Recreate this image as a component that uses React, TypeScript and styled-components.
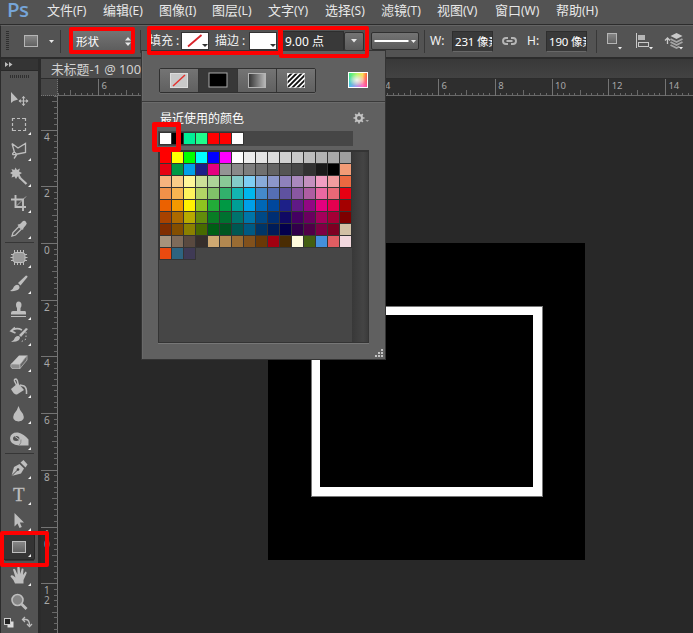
import React from 'react';
import styled, { createGlobalStyle, css } from 'styled-components';

const GlobalStyle = createGlobalStyle`
  *, *::before, *::after { box-sizing: border-box; }
  html, body { margin: 0; padding: 0; overflow: hidden; background: #282828; }
  body { font-family: "Noto Sans", "Noto Sans CJK SC", sans-serif; font-size: 12px; color: #e6e6e6; }
  svg { display: block; }
`;

const AppWindow = styled.div`
  position: relative;
  display: flex;
  flex-direction: column;
  width: 693px;
  height: 633px;
  overflow: hidden;
  background: #282828;
`;

/* ---------- menu bar ---------- */

const MenuBar = styled.nav`
  display: flex;
  flex: none;
  height: 25px;
  padding-left: 7px;
  background: #535353;
  border-bottom: 1px solid #2c2c2c;
`;

const Logo = styled.div`
  width: 40px;
  font: 600 20.5px/18px "Open Sans", sans-serif;
  letter-spacing: -0.5px;
  color: #76a5d8;
  height: 24px;
`;

const MenuItem = styled.span<{ $w: number }>`
  width: ${p => p.$w}px;
  flex: none;
  font-size: 12px;
  line-height: 19px;
  white-space: nowrap;
  color: #e8e8e8;
`;

const Cjk = styled.span`
  font-family: "Noto Sans CJK SC", sans-serif;
  font-size: 13px;
`;

/* ---------- options bar ---------- */

const OptionsBar = styled.div`
  display: flex;
  align-items: center;
  flex: none;
  height: 34px;
  padding: 0 0 1px 5px;
  background: #535353;
  border-top: 1px solid #646464;
  border-left: 1px solid #2c2c2c;
  border-bottom: 2px solid #2c2c2c;
`;

const Slot = styled.div<{ $w: number; $gap?: number }>`
  display: flex;
  align-items: center;
  flex: none;
  width: ${p => p.$w}px;
  margin-left: ${p => p.$gap ?? 0}px;
  white-space: nowrap;
`;

const Label = styled(Slot)`
  font: 12px/18px "Noto Sans", "Noto Sans CJK SC", sans-serif;
  color: #f2f2f2;
`;

const Divider = styled.div<{ $gap: number }>`
  flex: none;
  width: 1px;
  height: 23px;
  margin-left: ${p => p.$gap}px;
  background: #383838;
`;

const raised = css`
  background: linear-gradient(#747474, #5b5b5b);
  border: 1px solid #303030;
  border-radius: 2px;
`;

const ModeSelect = styled(Slot)`
  ${raised};
  height: 23px;
  padding-left: 6px;
  justify-content: space-between;
  padding-right: 3px;
  color: #fff;
  font-size: 11.5px;
`;

const PaintSwatch = styled(Slot)`
  height: 18px;
  background: #fff;
  border: 1px solid #333;
`;

const Field = styled(Slot)`
  height: 21px;
  padding-left: 2px;
  background: #393939;
  border: 1px solid #2e2e2e;
  border-bottom-color: #686868;
  color: #fff;
  overflow: hidden;
`;

const SizeField = styled(Field)`
  font-size: 11.5px;
  letter-spacing: -0.2px;
`;

const DropButton = styled(Slot)`
  ${raised};
  height: 19px;
  justify-content: center;
`;

const LineSelect = styled(Slot)`
  ${raised};
  height: 18px;
`;

/* ---------- workspace ---------- */

const Workspace = styled.div`
  display: flex;
  flex: 1;
  min-height: 0;
`;

const ToolPalette = styled.aside`
  display: flex;
  flex-direction: column;
  flex: none;
  width: 41px;
  background: #535353;
  border-left: 1px solid #2c2c2c;
  border-right: 3px solid #2b2b2b;
`;

const PaletteHeader = styled.div`
  flex: none;
  height: 12px;
  padding: 3px 0 0 4px;
  background: #343434;
  border-bottom: 1px solid #292929;
`;

const PaletteGrip = styled.div`
  flex: none;
  height: 15px;
  padding: 4px 0 0 9px;
`;

const Tool = styled.div<{ $active?: boolean }>`
  position: relative;
  flex: none;
  width: 32px;
  height: 26px;
  margin-left: 2px;
  padding-left: 3px;
  border-radius: 2px;
  background: ${p => (p.$active ? '#343434' : 'transparent')};
  box-shadow: ${p => (p.$active ? 'inset 0 0 0 1px #272727' : 'none')};
`;

const ToolDivider = styled.div`
  flex: none;
  height: 3px;
  margin: 0 4px;
  border-top: 1px solid #363636;
`;

const Document = styled.main`
  display: flex;
  flex-direction: column;
  flex: 1;
  min-width: 0;
`;

const TabStrip = styled.div`
  display: flex;
  flex: none;
  height: 20px;
  background: linear-gradient(#393939, #424242);
  border-bottom: 1px solid #2c2c2c;
`;

const Tab = styled.div`
  width: 160px;
  padding-left: 10px;
  background: #4c4c4c;
  font: 12.8px/21px "Noto Sans", "Noto Sans CJK SC", sans-serif;
  color: #d2d2d2;
  white-space: nowrap;
`;

const CanvasGrid = styled.div`
  display: grid;
  grid-template: 17px 1fr / 17px 1fr;
  flex: 1;
`;

const RulerCorner = styled.div`
  background: #464646;
  border-right: 1px dotted #777;
  border-bottom: 1px dotted #777;
`;

const RulerBox = styled.div`
  background: #2e2e2e;
  overflow: hidden;
`;

const Pasteboard = styled.div`
  position: relative;
  background: #282828;
`;

const Artboard = styled.div`
  position: absolute;
  left: 210px;
  top: 147px;
  width: 317px;
  height: 317px;
  background: #000;
`;

const DrawnRectangle = styled.div`
  position: absolute;
  left: 43px;
  top: 63px;
  width: 232px;
  height: 191px;
  border: 1px solid #777;

  &::after {
    content: "";
    display: block;
    height: 100%;
    border: solid #fff;
    border-width: 8px 9px 9px 8px;
  }
`;

/* ---------- fill popup ---------- */

const FillPopup = styled.section`
  position: absolute;
  left: 141px;
  top: 50px;
  width: 245px;
  height: 310px;
  background: #606060;
  border: 1px solid #343434;
  display: flex;
  flex-direction: column;
  box-shadow: inset 1px 0 #696969;
`;

const FillTypes = styled.div`
  display: flex;
  align-items: center;
  height: 50px;
  padding: 8px 0 0 17px;
  flex: none;
`;

const Segments = styled.div`
  display: flex;
  width: 157px;
  height: 25px;
  border: 1px solid #303030;
  border-radius: 2px;
  box-shadow: 0 1px #6d6d6d;
`;

const Segment = styled.div<{ $active?: boolean }>`
  display: flex;
  align-items: center;
  justify-content: center;
  flex: 1;
  background: ${p => (p.$active ? '#383838' : 'linear-gradient(#747474, #606060)')};

  & + & { border-left: 1px solid #353535; }
`;

const SpectrumButton = styled.div`
  margin-left: 32px;
`;

const RecentHeader = styled.div`
  display: flex;
  align-items: center;
  justify-content: space-between;
  flex: none;
  height: 30px;
  padding: 3px 16px 0 18px;
  border-top: 1px solid #3a3a3a;
  box-shadow: inset 0 1px #6b6b6b;
  font: 12px/18px "Noto Sans CJK SC", sans-serif;
  color: #fff;
`;

const RecentStrip = styled.div`
  display: flex;
  gap: 1px;
  flex: none;
  width: 195px;
  height: 15px;
  margin-left: 16px;
  padding: 2px;
  background: #464646;
`;

const Swatch = styled.i<{ $color: string }>`
  display: block;
  width: 11px;
  height: 11px;
  background: ${p => p.$color};
  box-shadow: 0 0 0 1px #343434;
`;

const SwatchArea = styled.div`
  display: flex;
  justify-content: space-between;
  flex: none;
  width: 211px;
  height: 193px;
  margin: 4px 0 0 16px;
  background: #464646;
  border: 1px solid #343434;
  border-top-width: 2px;
  box-shadow: 0 1px #777;
`;

const SwatchGrid = styled.div`
  display: grid;
  grid-template-columns: repeat(16, 11px);
  grid-auto-rows: 11px;
  gap: 1px;
  padding-left: 1px;
  align-content: start;
`;

const ScrollTrack = styled.div`
  width: 16px;
  background: linear-gradient(90deg, #383838, #444 70%, #3b3b3b);
`;

const ResizeCorner = styled.div`
  display: flex;
  justify-content: flex-end;
  padding: 6px 2px 0 0;
`;

/* ---------- highlight frames laid over the window ---------- */

const Highlight = styled.div<{ $x: number; $y: number; $w: number; $h: number; $b?: number }>`
  position: absolute;
  left: ${p => p.$x}px;
  top: ${p => p.$y}px;
  width: ${p => p.$w}px;
  height: ${p => p.$h}px;
  border: ${p => p.$b ?? 4}px solid #fe0000;
  border-radius: 2px;
  pointer-events: none;
`;

const menus: [string, string, number][] = [
  ['文件', '(F)', 56], ['编辑', '(E)', 56], ['图像', '(I)', 53], ['图层', '(L)', 56],
  ['文字', '(Y)', 57], ['选择', '(S)', 56], ['滤镜', '(T)', 56], ['视图', '(V)', 58],
  ['窗口', '(W)', 61], ['帮助', '(H)', 50],
];

const recent = ['#fff', '#000', '#00ef96', '#20fc8b', '#f00', '#f00', '#fff'];

const swatches = `
ff0000 ffff00 00ff00 00ffff 0000ff ff00ff ffffff ededed e4e4e4 dbdbdb d1d1d1 c8c8c8 bdbdbd b3b3b3 a9a9a9 9e9e9e
e60012 009944 00a0e9 1d2088 e4007f 949494 898989 7d7d7d 707070 636363 555555 464646 323232 1a1a1a 000000 f29b76
f6b37f facd89 fff799 cce198 acd598 89c997 84ccc9 7ecef4 88abda 8c97cb 8f82bc aa89bd c490bf f19ec2 f29c9f ec6941
f19149 f8b551 fff45c b3d465 80c269 32b16c 13b5b1 00b7ee 448aca 556fb5 5f52a0 8957a1 ae5da1 ea68a2 eb6877 e60012
eb6100 f39800 fff100 8fc31f 22ac38 009944 009e96 00a0e9 0068b7 00479d 1d2088 601986 920783 e4007f e5004f a40000
a84200 ac6a00 b7aa00 638c0b 097c25 007130 00736d 0075a9 004986 002e73 100964 440062 6a005f a4005b a40035 7d0000
7f2d00 834e00 8a8000 486a00 005e15 005520 005752 005982 003567 001c58 03004c 31004a 500047 7e0043 7d0022 d1c0a5
a6937c 7e6b5a 59493f 362e2b cfa972 b28850 996c33 81511c 6a3906 a20010 4a2c03 fffbdc 445f11 448fdb e05d62 f2d8de
e94a10 2e6480 3f3a55`.trim().split(/\s+/);

const CM = 56.7;

function HorizontalRuler() {
  const origin = 210;
  const ticks = [];
  for (let i = -38; i <= 80; i++) {
    const x = Math.round(origin + (i * CM) / 10);
    const h = i % 10 === 0 ? 17 : i % 5 === 0 ? 6 : 3;
    ticks.push(<rect key={i} x={x} y={17 - h} width="1" height={h} fill={i % 10 === 0 ? '#747474' : '#696969'} />);
  }
  return (
    <svg width="635" height="17">
      <rect y="16" width="635" height="1" fill="#696969" />
      {ticks}
      {[-3, -2, -1, 0, 1, 2, 3, 4, 5, 6, 7].map(n => (
        <text key={n} x={origin + n * CM + 3.5} y="10" fontFamily="Noto Sans" fontSize="9.5" fill="#a8a8a8">{Math.abs(n * 2)}</text>
      ))}
    </svg>
  );
}

function VerticalRuler() {
  const origin = 147;
  const ticks = [];
  for (let i = -26; i <= 68; i++) {
    const y = Math.round(origin + (i * CM) / 10);
    const w = i % 10 === 0 ? 17 : i % 5 === 0 ? 6 : 4;
    ticks.push(<rect key={i} x={17 - w} y={y} width={w} height="1" fill={i % 10 === 0 ? '#747474' : '#696969'} />);
  }
  return (
    <svg width="17" height="537">
      <rect x="16" width="1" height="537" fill="#747474" />
      {ticks}
      {[-2, -1, 0, 1, 2, 3, 4, 5, 6].map(n =>
        String(Math.abs(n * 2)).split('').map((d, k) => (
          <text key={`${n}-${k}`} x="3" y={origin + n * CM + 11 + k * 10} fontFamily="Noto Sans" fontSize="10" fill="#a8a8a8">{d}</text>
        )),
      )}
    </svg>
  );
}

const Caret = ({ color = '#e8e8e8', w = 6 }: { color?: string; w?: number }) => (
  <svg width={w} height={w / 2 + 0.5}><path d={`M0 0H${w}L${w / 2} ${w / 2 + 0.5}Z`} fill={color} /></svg>
);

const L = '#bebebe';

const icons: Record<string, React.ReactNode> = {
  move: (
    <>
      <path d="M5 6V17L7.500 15L12 13.500Z" fill={L} />
      <path d="M17.500 10.500V19.500M13 15H22" stroke={L} strokeWidth="1.100" />
      <path d="M17.500 10L19.500 12.300H15.500ZM17.500 20L19.500 17.700H15.500ZM12.500 15L14.800 13V17ZM22.500 15L20.200 13V17Z" fill={L} />
    </>
  ),
  marquee: <path d="M6.500 9V6.500H9M11 6.500H14M16 6.500H19.500V9M19.500 11V14M19.500 16V18.500H17M15 18.500H12M10 18.500H6.500V16M6.500 14V11" stroke={L} strokeWidth="1.200" fill="none" />,
  lasso: <path d="M6 5.500L12 10L19.500 5.500V14.500L9 16.500Q5 17 7.500 14.500Q10 14 10.500 17L8 20.500M8.500 14.500L6 5.500" stroke={L} strokeWidth="1.300" fill="none" />,
  wand: (
    <>
      <path d="M9.500 3.500L11 6L14 4.500L13 7.500L16 9L13.500 10.500L15 13.500L11.500 12.500L10 15L8.500 12.500L5.500 13.500L6.500 10.500L4 9L6.500 7.500L5.500 5L8.500 6Z" fill={L} />
      <path d="M13 13L20.500 20" stroke={L} strokeWidth="2.200" />
    </>
  ),
  crop: (
    <>
      <path d="M9.500 5V17H20M5 9.500H17V21" stroke={L} strokeWidth="1.900" fill="none" />
      <path d="M10.500 16L20 6.500" stroke={L} strokeWidth=".8" />
    </>
  ),
  eyedropper: (
    <>
      <path d="M6 20L7 16.500L13 10.500L15.500 13L9.500 19Z" stroke={L} strokeWidth="1.300" fill="#555" />
      <path d="M12 8.500L14 8L17 5Q19 4 20 6Q21.500 7.500 20 9L17.500 12L17 14L11.500 9Z" fill={L} />
    </>
  ),
  patch: (
    <>
      <path d="M8.500 5V20M11.500 5V20M14.500 5V20M17.500 5V20M5 9.500H21M4.500 12.500H21.500M5 15.500H21" stroke={L} />
      <rect x="7" y="7.500" width="12" height="10" rx="3" fill="#9a9a9a" stroke={L} />
    </>
  ),
  brush: (
    <>
      <path d="M12 12L20 4.500Q22 4.500 21.500 6L14.500 14.500Z" fill={L} />
      <path d="M4 20Q7 19 8 15.500Q10.500 12.500 13 14.500Q15 18 10 19.500Q7 20.500 4 20Z" fill={L} />
    </>
  ),
  stamp: (
    <>
      <path d="M10 8Q10 4.500 12.500 4.500Q15.500 4.500 15.500 8Q15.500 10 14.500 11V14H19Q20 14 20 16V17.500H5V16Q5 14 7 14H11V11Q10 10 10 8Z" fill={L} />
      <path d="M5 19.500H20" stroke={L} />
    </>
  ),
  history: (
    <>
      <path d="M5 8Q10 4 16 7M9 4.500L5 8L9.500 10" stroke={L} strokeWidth="1.700" fill="none" />
      <path d="M13 12L20 5L22 6L15 14ZM5 19Q8 18 9 14.500Q12 12 14 14Q14 17.500 10 18.500Z" fill={L} />
      <path d="M20 9V16L14 19.500" stroke={L} strokeDasharray="1.500 2" fill="none" />
    </>
  ),
  eraser: (
    <>
      <path d="M5 15L13 6.500H21L14 15.500Z" fill="#c9c9c9" />
      <path d="M5 15L14 15.500V19.500H6Q4 18 5 15Z" fill="#8e8e8e" stroke={L} strokeWidth=".7" />
      <path d="M14 15.500L21 6.500V11L14 19.500Z" fill="#666" stroke={L} strokeWidth=".7" />
    </>
  ),
  bucket: (
    <>
      <path d="M5 14L12 8L18 15L11 19.500Q8 20 5 14Z" fill={L} />
      <path d="M12 13L8.500 6Q8 4 10 4Q12 5 12 11M14 10L18 11Q21 12.500 20.500 19" stroke={L} strokeWidth="1.500" fill="none" />
    </>
  ),
  drop: <path d="M12.500 5Q13.500 9 17 13Q20 20 12.500 20.500Q5 20 8 13Q11.500 9 12.500 5Z" fill={L} />,
  sponge: (
    <>
      <path fillRule="evenodd" d="M4 11Q5 5 12 5.500Q18 7 22.500 12.500V18.500H13Q4 18 4 11ZM7 11.500A3.200 2.500 0 1 0 13.400 11.500A3.200 2.500 0 1 0 7 11.500Z" fill={L} />
      <path d="M9 9.500L13 12.500" stroke={L} />
      <path d="M13 18.500Q15.500 16 15 12.500" stroke="#888" fill="none" />
    </>
  ),
  pen: (
    <>
      <path d="M5.500 20L8 11L13.500 8L18 12.500L15 17.500Z" fill={L} />
      <path d="M5.500 20L11.500 14" stroke="#444" />
      <circle cx="12" cy="13.500" r="1.300" fill="#444" />
      <path d="M14.500 6.500L17.500 4L21.500 8.500L19.500 11.500Z" fill={L} />
    </>
  ),
  type: <text x="7" y="19" fontFamily="Liberation Serif" fontSize="19" fill={L} stroke={L} strokeWidth=".3">T</text>,
  select: <path d="M8.500 5V18.500L11.500 15.500L13.500 20L15.800 19L13.800 14.500H18Z" fill={L} />,
  rect: <rect x="6.500" y="7.500" width="13" height="11" fill="url(#metal)" stroke={L} />,
  hand: <path d="M9 20.500Q8 17 4.500 13.500Q5 11.500 7 12.500L9.500 14.500L7 6.500Q8 5 9.200 6.500L11.500 11.500L11.300 4.500Q12.500 3.200 13.700 4.500L14.200 11L15.800 5.500Q17.500 5 17.500 6.500L17 12L19.500 8.500Q21 8.500 20.500 10.500L17.500 17V20.500Z" fill={L} />,
  zoom: (
    <>
      <circle cx="11.500" cy="11" r="5.500" fill="#858585" stroke={L} strokeWidth="1.600" />
      <path d="M15.500 15L20.500 20" stroke={L} strokeWidth="2.800" />
    </>
  ),
};

const groups = [
  ['move', 'marquee', 'lasso', 'wand', 'crop', 'eyedropper'],
  ['patch', 'brush', 'stamp', 'history', 'eraser', 'bucket', 'drop', 'sponge'],
  ['pen', 'type', 'select', 'rect'],
  ['hand', 'zoom'],
];

function ToolButton({ name }: { name: string }) {
  const hasMore = name !== 'move' && name !== 'zoom';
  return (
    <Tool $active={name === 'rect'}>
      <svg width="28" height="26">
        <g>{icons[name]}</g>
        {hasMore && <path d="M25 20V23H22Z" fill="#f2f2f2" />}
      </svg>
    </Tool>
  );
}

const SharedGradients = styled.svg`
  position: absolute;
  width: 0;
  height: 0;
`;

export default function App() {
  return (
    <AppWindow>
      <GlobalStyle />
      <SharedGradients>
        <defs>
          <linearGradient id="metal" x1="0" y1="0" x2="0" y2="1">
            <stop offset="0" stopColor="#888" /><stop offset="1" stopColor="#606060" />
          </linearGradient>
        </defs>
      </SharedGradients>

      <MenuBar>
        <Logo>Ps</Logo>
        {menus.map(([name, key, w]) => (
          <MenuItem key={name} $w={w}><Cjk>{name}</Cjk>{key}</MenuItem>
        ))}
      </MenuBar>

      <OptionsBar>
        <Slot $w={18}>
          <svg width="3" height="20">
            {Array.from({ length: 10 }, (_, i) => <rect key={i} y={i * 2} width="3" height="1" fill="#2f2f2f" />)}
          </svg>
        </Slot>
        <Slot $w={25}>
          <svg width="14" height="12"><rect x=".5" y=".5" width="13" height="11" fill="url(#metal)" stroke="#b5b5b5" /></svg>
        </Slot>
        <Slot $w={6}><Caret w={5} /></Slot>
        <Divider $gap={5} />
        <ModeSelect $w={66} $gap={8}>
          形状
          <svg width="6" height="9"><path d="M3 0L6 3.500H0ZM3 9L0 5.500H6Z" fill="#e8e8e8" /></svg>
        </ModeSelect>
        <Divider $gap={5} />
        <Label $w={32} $gap={8}>填充 :</Label>
        <PaintSwatch $w={28}>
          <svg width="26" height="16">
            <path d="M6 13.500L19.500 2" stroke="#d9222a" strokeWidth="1.800" />
            <path d="M20 11H26L23 14Z" fill="#333" />
          </svg>
        </PaintSwatch>
        <Label $w={34} $gap={6}>描边 :</Label>
        <PaintSwatch $w={28}>
          <svg width="26" height="16"><path d="M20 11H26L23 14Z" fill="#333" /></svg>
        </PaintSwatch>
        <Field $w={62} $gap={5}>9.00 点</Field>
        <DropButton $w={20}><Caret /></DropButton>
        <LineSelect $w={48} $gap={7}>
          <svg width="46" height="16">
            <path d="M2.500 8H36.500" stroke="#fff" strokeWidth="2" />
            <path d="M39 7H44L41.500 10Z" fill="#eee" />
          </svg>
        </LineSelect>
        <Divider $gap={5} />
        <Label $w={22} $gap={5}>W:</Label>
        <SizeField $w={41}>231 像素</SizeField>
        <Slot $w={25} $gap={9}>
          <svg width="15" height="10" fill="none" stroke="#b5b5b5" strokeWidth="1.900">
            <path d="M6 8H4Q1 8 1 5Q1 2 4 2H6M9 2H11Q14 2 14 5Q14 8 11 8H9M4.500 5H10.500" />
          </svg>
        </Slot>
        <Label $w={19}>H:</Label>
        <SizeField $w={41}>190 像素</SizeField>
        <Divider $gap={9} />
        <Slot $w={29} $gap={9}>
          <svg width="18" height="18">
            <rect x="1.500" y="1.500" width="9" height="10" fill="url(#metal)" stroke="#b5b5b5" />
            <path d="M12 15H16L14 17.500Z" fill="#eee" />
          </svg>
        </Slot>
        <Slot $w={29}>
          <svg width="18" height="18">
            <path d="M1.500 1V16" stroke="#c9c9c9" />
            <rect x="3" y="3" width="7" height="5" fill="#b5b5b5" />
            <rect x="3.500" y="10.500" width="10" height="4" fill="#555" stroke="#c9c9c9" />
            <path d="M14 15H18L16 17.500Z" fill="#eee" />
          </svg>
        </Slot>
        <Slot $w={22}>
          <svg width="21" height="20">
            <path d="M3.500 13V8M1 9.500L3.500 7L6 9.500" stroke="#c9c9c9" strokeWidth="1.300" fill="none" />
            <path d="M12.500 2L18.500 5L12.500 8L6.500 5Z" fill="#c9c9c9" />
            <path d="M6.500 8L12.500 11L18.500 8M6.500 11L12.500 14L18.500 11M6.500 14L12.500 17L15.500 15.500" stroke="#a5a5a5" strokeWidth="1.900" fill="none" />
            <path d="M15 16H19L17 18.500Z" fill="#eee" />
          </svg>
        </Slot>
      </OptionsBar>

      <Workspace>
        <ToolPalette>
          <PaletteHeader>
            <svg width="8" height="5"><path d="M0 0L3.500 2.500L0 5ZM4 0L7.500 2.500L4 5Z" fill="#bdbdbd" /></svg>
          </PaletteHeader>
          <PaletteGrip>
            <svg width="20" height="3">
              {Array.from({ length: 10 }, (_, i) => <rect key={i} x={i * 2} width="1" height="3" fill="#2f2f2f" />)}
            </svg>
          </PaletteGrip>
          {groups.map((g, i) => (
            <React.Fragment key={i}>
              {i > 0 && <ToolDivider />}
              {g.map(name => <ToolButton key={name} name={name} />)}
            </React.Fragment>
          ))}
          <svg width="34" height="18">
            <rect x="6.500" y="6.500" width="6" height="6" fill="#ddd" />
            <rect x="3.500" y="3.500" width="6" height="6" fill="#222" stroke="#ccc" />
            <path d="M22 4.500H25Q28.500 5 28.500 10M24 2L21.500 4.500L24 7M26 9L28.500 11.500L31 9" stroke={L} strokeWidth="1.300" fill="none" />
          </svg>
        </ToolPalette>

        <Document>
          <TabStrip><Tab>未标题-1 @ 100%</Tab></TabStrip>
          <CanvasGrid>
            <RulerCorner />
            <RulerBox><HorizontalRuler /></RulerBox>
            <RulerBox><VerticalRuler /></RulerBox>
            <Pasteboard>
              <Artboard><DrawnRectangle /></Artboard>
            </Pasteboard>
          </CanvasGrid>
        </Document>
      </Workspace>

      <FillPopup>
        <FillTypes>
          <Segments>
            <Segment>
              <svg width="18" height="15">
                <rect x=".5" y=".5" width="17" height="14" fill="#c9c9c9" stroke="#ddd" />
                <path d="M3 13L15 2" stroke="#e2322f" strokeWidth="1.500" />
              </svg>
            </Segment>
            <Segment $active>
              <svg width="20" height="16"><rect x="1" y="1" width="18" height="14" fill="#000" stroke="#aaa" /></svg>
            </Segment>
            <Segment>
              <svg width="18" height="15">
                <defs><linearGradient id="fade"><stop stopColor="#333" /><stop offset="1" stopColor="#bbb" /></linearGradient></defs>
                <rect x=".5" y=".5" width="17" height="14" fill="url(#fade)" stroke="#b5b5b5" />
              </svg>
            </Segment>
            <Segment>
              <svg width="18" height="15">
                <rect width="18" height="15" fill="#fff" />
                <path d="M-1 6L6 -1M-1 11L11 -1M-1 16L16 -1M4 16L19 1M9 16L19 6M14 16L19 11" stroke="#111" strokeWidth="1.900" />
                <rect x=".5" y=".5" width="17" height="14" fill="none" stroke="#ddd" strokeOpacity=".6" />
              </svg>
            </Segment>
          </Segments>
          <SpectrumButton>
            <svg width="20" height="16">
              <defs>
                <linearGradient id="top-hues">
                  <stop stopColor="#39e24f" /><stop offset=".3" stopColor="#2fd5ea" />
                  <stop offset=".65" stopColor="#a46cff" /><stop offset="1" stopColor="#ff3f9b" />
                </linearGradient>
                <linearGradient id="bottom-hues">
                  <stop stopColor="#48b8ff" /><stop offset=".4" stopColor="#a98aff" />
                  <stop offset=".75" stopColor="#ff58dc" /><stop offset="1" stopColor="#ff4a9c" />
                </linearGradient>
                <linearGradient id="warm">
                  <stop stopColor="#3fe88a" /><stop offset=".45" stopColor="#b8f56a" />
                  <stop offset=".75" stopColor="#ffdf5a" /><stop offset="1" stopColor="#ff5a3c" />
                </linearGradient>
                <linearGradient id="down" x1="0" y1="0" x2="0" y2="1">
                  <stop offset=".2" stopColor="#fff" stopOpacity="0" /><stop offset="1" stopColor="#fff" />
                </linearGradient>
                <mask id="lower"><rect width="20" height="16" fill="url(#down)" /></mask>
                <radialGradient id="glow"><stop stopColor="#fff" /><stop offset="1" stopColor="#fff" stopOpacity="0" /></radialGradient>
              </defs>
              <rect width="20" height="16" fill="#fff" />
              <rect x="1" y="1" width="18" height="14" fill="url(#warm)" />
              <rect x="1" y="1" width="18" height="14" fill="url(#bottom-hues)" mask="url(#lower)" />
              <ellipse cx="9" cy="8" rx="8" ry="6" fill="url(#glow)" opacity=".8" />
            </svg>
          </SpectrumButton>
        </FillTypes>

        <RecentHeader>
          最近使用的颜色
          <svg width="16" height="12">
            <circle cx="6" cy="6" r="3" fill="none" stroke="#c4c4c4" strokeWidth="2" />
            <path d="M6 0.500V3M6 9V11.500M0.500 6H3M9 6H11.500M2.200 2.200L4 4M8 8L9.800 9.800M9.800 2.200L8 4M4 8L2.200 9.800" stroke="#c4c4c4" strokeWidth="1.700" />
            <path d="M12.500 8H16L14.200 10Z" fill="#aaa" />
          </svg>
        </RecentHeader>

        <RecentStrip>{recent.map((c, i) => <Swatch key={i} $color={c} />)}</RecentStrip>
        <SwatchArea>
          <SwatchGrid>{swatches.map((c, i) => <Swatch key={i} $color={`#${c}`} />)}</SwatchGrid>
          <ScrollTrack />
        </SwatchArea>
        <ResizeCorner>
          <svg width="8" height="8" fill="#c4c4c4">
            <path d="M6 0h2v2h-2zM3 3h2v2h-2zM6 3h2v2h-2zM0 6h2v2h-2zM3 6h2v2h-2zM6 6h2v2h-2z" />
          </svg>
        </ResizeCorner>
      </FillPopup>

      <Highlight $x={69} $y={27} $w={66} $h={27} />
      <Highlight $x={147} $y={26} $w={135} $h={29} />
      <Highlight $x={279} $y={26} $w={90} $h={32} />
      <Highlight $x={152} $y={122} $w={29} $h={30} $b={5} />
      <Highlight $x={0} $y={531} $w={49} $h={36} />
    </AppWindow>
  );
}
